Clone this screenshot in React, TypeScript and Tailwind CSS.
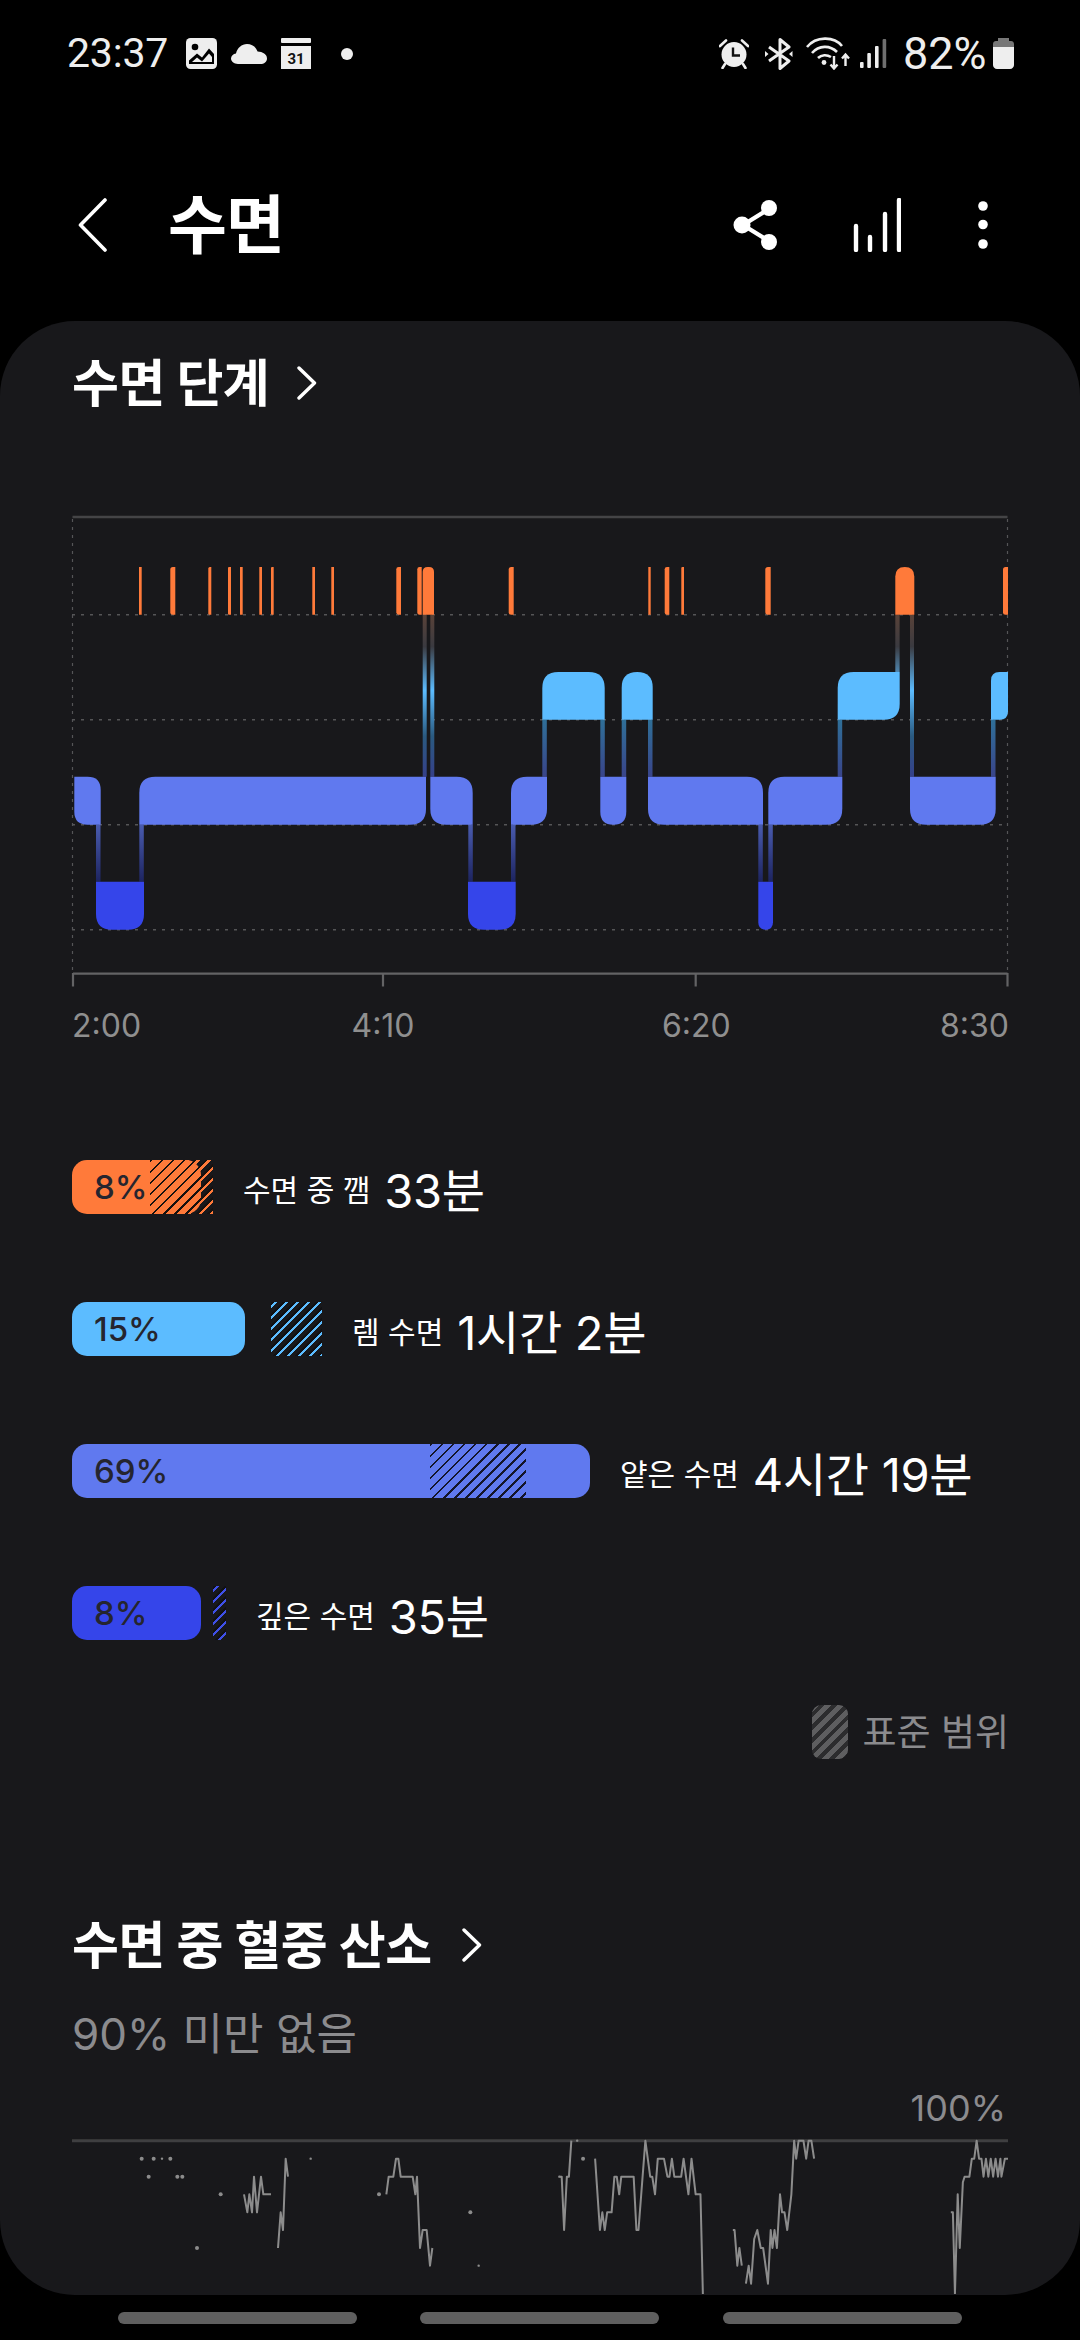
import React from "react";

const ORANGE = "#ff7a3a";
const REM = "#5cbcff";
const LIGHT = "#6079ef";
const DEEP = "#3545ea";

type Seg = [number, number, number, number, number, number];
function seg(x1: number, x2: number, y1: number, y2: number, tl: number, tr: number, br: number, bl: number) {
  const m = (x2 - x1) / 2;
  const a = Math.min(tl, m), b = Math.min(tr, m), c = Math.min(br, m), d = Math.min(bl, m);
  return `M${x1 + a} ${y1}H${x2 - b}Q${x2} ${y1} ${x2} ${y1 + b}V${y2 - c}Q${x2} ${y2} ${x2 - c} ${y2}H${x1 + d}Q${x1} ${y2} ${x1} ${y2 - d}V${y1 + a}Q${x1} ${y1} ${x1 + a} ${y1}Z`;
}

const W: [number, number] = [566, 613.7];
const R: [number, number] = [671, 718.7];
const L: [number, number] = [775.7, 823.7];
const D: [number, number] = [880.7, 928.7];
const r = 16;

const lightSegs: Seg[] = [
  [74.3, 100.7, 0, r, 0, r],
  [139.3, 426, r, 0, r, 0],
  [430.3, 472.7, 0, r, 0, r],
  [511, 547, r, 0, r, 0],
  [600.3, 626.3, 0, 0, r, r],
  [648, 763, 0, r, 0, r],
  [768.3, 842.3, r, 0, r, 0],
  [910, 995.7, 0, 0, r, r],
];
const deepSegs: Seg[] = [
  [96, 144, 0, 0, r, r],
  [468, 515.7, 0, 0, r, r],
  [758.3, 773, 0, 0, r, r],
];
const remSegs: Seg[] = [
  [542.3, 604.7, r, r, 0, 0],
  [621.7, 652.7, r, r, 0, 0],
  [837.7, 899.7, r, 0, r, 0],
  [991, 1008, r, 0, r, 0],
];
const wakeSegs: Seg[] = [
  [139, 141.7, 0, 0, 0, 0],
  [170.3, 175.3, 4, 0, 0, 4],
  [208.3, 211.3, 2, 0, 0, 2],
  [228, 231, 1, 0, 0, 1],
  [240, 242.7, 0, 0, 0, 0],
  [259.3, 262, 0, 0, 0, 0],
  [271, 273.7, 1, 0, 0, 1],
  [312.3, 315, 0, 0, 0, 0],
  [331.3, 334, 0, 0, 0, 0],
  [396.3, 401, 4, 0, 0, 4],
  [417.3, 421.7, 4, 0, 0, 4],
  [422.7, 434, 5, 5, 0, 0],
  [508.7, 513.7, 4, 0, 0, 4],
  [648.3, 650.7, 0, 0, 0, 0],
  [664.7, 669.3, 4, 0, 0, 4],
  [681.3, 684, 1, 0, 0, 0],
  [765.3, 770.7, 4, 0, 0, 4],
  [895.3, 914.3, 10, 10, 0, 0],
  [1003, 1008, 5, 0, 0, 5],
];

const connLD = [96, 139.3, 468.3, 511, 758.3, 768.3];
const connRL = [542.3, 600.3, 621.7, 648, 837.7, 991];
const connWL = [422.7, 430.3, 910];

const spo2 = (pts: number[][], base: number, sx: number) =>
  pts.map(([x, y]) => `${base + x / sx},${2080 + y / 3}`).join(" ");

const lines6 = [
  [[612, 346], [622, 400], [628, 346], [636, 400], [642, 293], [651, 400], [663, 293], [670, 346], [693, 346]],
  [[714, 507], [722, 400], [729, 453], [737, 239], [744, 293]],
  [[1039, 346], [1046, 293], [1060, 293], [1068, 239], [1075, 239], [1082, 293], [1118, 293], [1126, 346], [1131, 293], [1140, 507], [1148, 453], [1160, 453], [1170, 560], [1177, 507]],
];
const lines7 = [
  [[57, 293], [63, 293], [70, 453], [78, 293], [84, 293], [91, 185]],
  [[160, 239], [174, 453], [181, 400], [188, 453], [195, 400], [208, 400], [216, 293], [223, 293], [230, 346], [236, 293], [272, 293], [280, 453], [286, 453], [306, 185], [320, 293], [326, 293], [334, 346], [342, 239], [360, 239], [370, 293], [376, 293], [383, 239], [390, 293], [410, 293], [417, 239], [424, 293], [431, 346], [440, 239], [452, 346], [466, 346], [473, 645]],
  [[560, 453], [565, 453], [573, 560], [579, 507], [586, 560]],
  [[598, 614], [606, 560], [613, 614], [622, 480], [631, 453], [641, 507], [648, 507], [662, 614], [670, 453], [675, 507], [681, 453], [688, 507], [697, 346], [703, 400], [710, 400], [718, 453], [730, 346], [738, 185], [744, 239], [751, 185], [765, 185], [773, 239], [780, 185], [788, 185], [796, 239]],
  [[1193, 400], [1199, 400], [1205, 645], [1213, 346], [1219, 507], [1228, 310], [1233, 293], [1247, 293], [1254, 239], [1261, 239], [1268, 185], [1275, 239], [1282, 239], [1288, 293], [1295, 239], [1302, 293], [1309, 239], [1316, 293], [1323, 239], [1330, 293], [1337, 239], [1340, 293], [1350, 239], [1359, 239]],
];
const dots6 = [[305, 239, 2], [341, 239, 2], [366, 239, 1.2], [391, 239, 2], [326, 293, 2], [412, 293, 2], [427, 293, 2], [471, 507, 2], [542, 346, 2], [812, 239, 1.2], [1017, 346, 2], [1291, 400, 2], [1316, 560, 1.2], [1558, 293, 1.2]];
const dots7 = [[108, 185, 1.2], [125, 239, 2]];

function StageChart() {
  return (
    <svg className="block w-[1080px] h-[490px] mt-[87px]" viewBox="0 505 1080 490">
      <defs>
        <linearGradient id="ld" gradientUnits="userSpaceOnUse" x1="0" x2="0" y1="823" y2="881">
          <stop offset="0" stopColor="#4a5cb0" />
          <stop offset="1" stopColor="#1d2460" />
        </linearGradient>
        <linearGradient id="rl" gradientUnits="userSpaceOnUse" x1="0" x2="0" y1="718" y2="776">
          <stop offset="0" stopColor="#2f7098" />
          <stop offset="1" stopColor="#39448a" />
        </linearGradient>
        <linearGradient id="wl" gradientUnits="userSpaceOnUse" x1="0" x2="0" y1="613" y2="776">
          <stop offset="0" stopColor="#5a4238" />
          <stop offset="0.2" stopColor="#3a3a40" />
          <stop offset="0.47" stopColor="#5cbcff" />
          <stop offset="0.75" stopColor="#2a5a80" />
          <stop offset="1" stopColor="#35408a" />
        </linearGradient>
      </defs>
      <path d="M72.5 516H1007.5" stroke="#444446" strokeWidth="2.5" />
      <path d="M72.5 518V972M1007.5 518V972" stroke="#555557" strokeWidth="1.2" strokeDasharray="3 5" />
      {[613.7, 718.7, 823.7, 928.7].map((y) => (
        <path key={y} d={`M72 ${y}H1008`} stroke="#555557" strokeWidth="1.5" strokeDasharray="3 6" />
      ))}
      {connLD.map((x) => (
        <rect key={x} x={x} y="823.7" width="4.5" height="57" fill="url(#ld)" />
      ))}
      {connRL.map((x) => (
        <rect key={x} x={x} y="718.7" width="4.5" height="57" fill="url(#rl)" />
      ))}
      {connWL.map((x) => (
        <rect key={x} x={x} y="613.7" width="4" height="162" fill="url(#wl)" />
      ))}
      <rect x="895.3" y="613.7" width="4.3" height="57.3" fill="url(#wl)" />
      {lightSegs.map((s, i) => (
        <path key={i} d={seg(s[0], s[1], L[0], L[1], s[2], s[3], s[4], s[5])} fill={LIGHT} />
      ))}
      {deepSegs.map((s, i) => (
        <path key={i} d={seg(s[0], s[1], D[0], D[1], s[2], s[3], s[4], s[5])} fill={DEEP} />
      ))}
      {remSegs.map((s, i) => (
        <path key={i} d={seg(s[0], s[1], R[0], R[1], s[2], s[3], s[4], s[5])} fill={REM} />
      ))}
      {wakeSegs.map((s, i) => (
        <path key={i} d={seg(s[0], s[1], W[0], W[1], s[2], s[3], s[4], s[5])} fill={ORANGE} />
      ))}
      <path d="M73 972.7H1007.5M73 972V985.5M383 972V985.5M695.7 972V985.5M1007.5 972V985.5" stroke="#636365" strokeWidth="2.2" fill="none" />
    </svg>
  );
}

function SpoChart() {
  return (
    <svg className="block w-[1080px] h-[155px]" viewBox="0 2140 1080 155">
      <path d="M72 2141.7H1008" stroke="#3f3f41" strokeWidth="3" />
      {lines6.map((p, i) => (
        <polyline key={i} points={spo2(p, 40, 3)} fill="none" stroke="#8c8c8c" strokeWidth="2" strokeLinejoin="round" />
      ))}
      {lines7.map((p, i) => (
        <polyline key={i} points={spo2(p, 540, 2.904)} fill="none" stroke="#8c8c8c" strokeWidth="2" strokeLinejoin="round" />
      ))}
      {dots6.map(([x, y, d], i) => (
        <circle key={i} cx={40 + x / 3} cy={2080 + y / 3} r={d} fill="#8c8c8c" />
      ))}
      {dots7.map(([x, y, d], i) => (
        <circle key={i} cx={540 + x / 2.904} cy={2080 + y / 3} r={d} fill="#8c8c8c" />
      ))}
    </svg>
  );
}

function Chevron({ className }: { className: string }) {
  return (
    <svg className={className} viewBox="0 0 20 34" fill="none">
      <path d="M2 2L17.5 17L2 32" stroke="#fff" strokeWidth="3.4" strokeLinecap="round" strokeLinejoin="round" />
    </svg>
  );
}

function StatusBar() {
  return (
    <div className="h-[105px] flex items-center justify-between pl-[67px] pr-[66px] text-[#eeeeee] pt-[2px] font-['Roboto',sans-serif]">
      <div className="flex items-center">
        <span className="text-[41px] leading-none w-[119px] tracking-[-0.2px]">23:37</span>
        <svg className="w-[31px] h-[31px]" viewBox="0 0 31 31">
          <rect width="31" height="31" rx="4.5" fill="#eeeeee" />
          <circle cx="9" cy="9" r="3.3" fill="#000" />
          <path d="M3 26V22.5L11 15.5L16 19.5L23 10.5L28 16V26Z" fill="#000" />
          <path d="M6 24L11 19.5L16 23.5L23 15.5L26 19V24Z" fill="#eeeeee" />
        </svg>
        <svg className="w-[36px] h-[20px] ml-[14px]" viewBox="0 0 36 20">
          <path d="M7 20C3 20 0 17.6 0 14.6C0 11.8 2.2 9.8 5 9.4C6.2 4 10.8 0 16 0C21 0 25 3 26.6 7.6C31.6 7.8 36 10.4 36 14.4C36 17.8 33 20 29.5 20Z" fill="#eeeeee" />
        </svg>
        <svg className="w-[30px] h-[31px] ml-[14px]" viewBox="0 0 30 31">
          <rect width="30" height="5" rx="1" fill="#eeeeee" />
          <rect y="8" width="30" height="23" fill="#eeeeee" />
          <text x="15" y="26" textAnchor="middle" fontSize="15" fontWeight="700" fontFamily="Roboto, sans-serif" fill="#111">31</text>
        </svg>
        <div className="w-[12px] h-[12px] rounded-full bg-[#eeeeee] ml-[30px]" />
      </div>
      <div className="flex items-center">
        <svg className="w-[30px] h-[31px]" viewBox="0 0 30 31">
          <circle cx="15" cy="16.5" r="12.5" fill="#eeeeee" />
          <path d="M1 8L7 2.5M29 8L23 2.5" stroke="#eeeeee" strokeWidth="2.6" strokeLinecap="round" />
          <path d="M6 26L3.5 30M24 26L26.5 30" stroke="#eeeeee" strokeWidth="2.6" strokeLinecap="round" />
          <path d="M14 9.5V17.5H21" stroke="#111" strokeWidth="2.4" fill="none" />
        </svg>
        <svg className="w-[28px] h-[32px] ml-[16px]" viewBox="0 0 28 32">
          <path d="M4 9L24 23L15 30.5V1.5L24 9L4 23" stroke="#eeeeee" strokeWidth="3" fill="none" strokeLinejoin="round" />
          <path d="M0 13L3.5 16L0 19ZM27.5 13L24 16L27.5 19Z" fill="#eeeeee" />
        </svg>
        <svg className="w-[44px] h-[33px] ml-[13px]" viewBox="0 0 44 33">
          <path d="M1 10C10 -1 28 -1 36 9" stroke="#eeeeee" strokeWidth="2.6" fill="none" />
          <path d="M6 16C13 8 24 8 31 15" stroke="#eeeeee" strokeWidth="2.6" fill="none" />
          <path d="M12 21C15.5 17.5 21 17.5 25 20" stroke="#eeeeee" strokeWidth="2.6" fill="none" />
          <circle cx="18" cy="25.5" r="2.4" fill="#eeeeee" />
          <path d="M28 19V31M24.5 27.5L28 31.5L31.5 27.5" stroke="#eeeeee" strokeWidth="2.4" fill="none" />
          <path d="M39.5 29V18M36 21.5L39.5 17.5L43 21.5" stroke="#eeeeee" strokeWidth="2.4" fill="none" />
        </svg>
        <svg className="w-[27px] h-[30px] ml-[10px]" viewBox="0 0 27 30">
          <rect x="0" y="23" width="3.6" height="6" rx="1" fill="#eeeeee" />
          <rect x="7.3" y="14" width="3.6" height="15" rx="1" fill="#eeeeee" />
          <rect x="15" y="7" width="3.6" height="22" rx="1" fill="#eeeeee" />
          <rect x="22.6" y="0" width="3.6" height="29" rx="1" fill="#6f6f6f" />
        </svg>
        <span className="text-[45px] leading-none ml-[16px] w-[90px]">82%</span>
        <svg className="w-[21px] h-[31px]" viewBox="0 0 21 31">
          <path d="M5 0H16V3H18C19.7 3 21 4.3 21 6V9H0V6C0 4.3 1.3 3 3 3H5Z" fill="#777777" />
          <path d="M0 9H21V27C21 29.2 19.2 31 17 31H4C1.8 31 0 29.2 0 27Z" fill="#eeeeee" />
        </svg>
      </div>
    </div>
  );
}

function Header() {
  return (
    <div className="h-[216px] flex items-center pl-[78px] pr-[92px] pt-[24px]">
      <svg className="w-[29px] h-[54px]" viewBox="0 0 29 54" fill="none">
        <path d="M27 2L2.5 27L27 52" stroke="#fff" strokeWidth="3.6" strokeLinecap="round" strokeLinejoin="round" />
      </svg>
      <h1 className="ml-[61px] text-[64px] leading-none font-bold text-white tracking-[-1px]">수면</h1>
      <div className="ml-auto flex items-center">
        <svg className="w-[46px] h-[52px]" viewBox="0 0 46 52">
          <path d="M36 10L10 26L36 42" stroke="#fff" strokeWidth="4.2" fill="none" />
          <circle cx="36" cy="9" r="8" fill="#fff" />
          <circle cx="9" cy="26" r="8.5" fill="#fff" />
          <circle cx="36" cy="43" r="8" fill="#fff" />
        </svg>
        <svg className="w-[48px] h-[54px] ml-[74px]" viewBox="0 0 48 54">
          <g stroke="#fff" strokeWidth="4.4" strokeLinecap="round">
            <path d="M3 28V52M17 39V52M32 16V52M46 2V52" />
          </g>
        </svg>
        <svg className="w-[10px] h-[48px] ml-[77px]" viewBox="0 0 10 48">
          <circle cx="5" cy="5" r="4.8" fill="#fff" />
          <circle cx="5" cy="23.5" r="4.8" fill="#fff" />
          <circle cx="5" cy="43" r="4.8" fill="#fff" />
        </svg>
      </div>
    </div>
  );
}

function Row({ pct, boxW, barW, hatchLeft, hatchW, hatch, bar, label, value, mt }: {
  pct: string; boxW: string; barW: string; hatchLeft: string; hatchW: string; hatch: string; bar: string; label: string; value: string; mt: string;
}) {
  return (
    <div className={`flex items-center h-[54px] ${mt}`}>
      <div className={`relative h-[54px] shrink-0 ${boxW}`}>
        <div className={`h-[54px] rounded-[15px] flex items-center pl-[22px] ${barW} ${bar}`}>
          <span className="text-[33px] leading-none font-medium text-[#25252f]">{pct}</span>
        </div>
        <div className={`absolute top-0 h-[54px] ${hatchLeft} ${hatchW} ${hatch}`} />
      </div>
      <span className="ml-[30px] text-[30px] leading-none text-white mt-[6px]">{label}</span>
      <span className="ml-[14px] text-[47px] leading-none text-white mt-[6px] font-normal tracking-[-0.3px]">{value}</span>
    </div>
  );
}

export default function App() {
  return (
    <div className="w-[1080px] h-[2340px] bg-black flex flex-col overflow-hidden font-['Inter','Noto_Sans_CJK_KR',sans-serif]">
      <StatusBar />
      <Header />
      <main className="h-[1974px] shrink-0 bg-[#18181b] rounded-[75px] overflow-hidden">
        <div className="flex items-center pl-[72px] h-[72px] mt-[26px]">
          <h2 className="text-[51px] leading-none font-bold text-white tracking-[-0.5px]">수면 단계</h2>
          <Chevron className="w-[20px] h-[34px] ml-[28px]" />
        </div>
        <StageChart />
        <div className="flex pl-[72px] h-[40px] mt-[10px] text-[32px] leading-[40px] text-[#8f8f8f]">
          <span className="w-[68px]">2:00</span>
          <span className="w-[68px] ml-[209px] text-center">4:10</span>
          <span className="w-[68px] ml-[245px] text-center">6:20</span>
          <span className="w-[68px] ml-[210px] text-right">8:30</span>
        </div>
        <div className="pl-[72px] mt-[114px]">
          <Row mt="mt-0" pct="8%" boxW="w-[141px]" barW="w-[129px]" hatchLeft="left-[78px]" hatchW="w-[63px]" bar="bg-[#ff7a3a]"
            hatch="bg-[repeating-linear-gradient(135deg,#17110f_0,#17110f_2px,#ff7a3a_2px,#ff7a3a_4.6px,transparent_4.6px,transparent_7.8px)]"
            label="수면 중 깸" value="33분" />
          <Row mt="mt-[88px]" pct="15%" boxW="w-[250px]" barW="w-[173px]" hatchLeft="left-[199px]" hatchW="w-[51px]" bar="bg-[#5cbcff]"
            hatch="bg-[repeating-linear-gradient(135deg,#111114_0,#111114_2.4px,#5cbcff_2.4px,#5cbcff_4.6px,transparent_4.6px,transparent_7.8px)]"
            label="렘 수면" value="1시간 2분" />
          <Row mt="mt-[88px]" pct="69%" boxW="w-[518px]" barW="w-[518px]" hatchLeft="left-[358px]" hatchW="w-[96px]" bar="bg-[#6079ef]"
            hatch="bg-[repeating-linear-gradient(135deg,#14152a_0,#14152a_2px,#6079ef_2px,#6079ef_4.6px,transparent_4.6px,transparent_7.8px)]"
            label="얕은 수면" value="4시간 19분" />
          <Row mt="mt-[88px]" pct="8%" boxW="w-[154px]" barW="w-[129px]" hatchLeft="left-[141px]" hatchW="w-[13px]" bar="bg-[#3545ea]"
            hatch="bg-[repeating-linear-gradient(135deg,#111114_0,#111114_2.4px,#3f50e8_2.4px,#3f50e8_4.6px,transparent_4.6px,transparent_7.8px)]"
            label="깊은 수면" value="35분" />
        </div>
        <div className="flex items-center justify-end pr-[71px] mt-[65px] h-[54px]">
          <div className="w-[36px] h-[54px] rounded-[9px] bg-[repeating-linear-gradient(135deg,#5e5e60_0,#5e5e60_5px,#2c2c2e_5px,#2c2c2e_9px)]" />
          <span className="ml-[14px] text-[37px] leading-none text-[#8b8b8e]">표준 범위</span>
        </div>
        <div className="flex items-center pl-[72px] h-[60px] mt-[156px]">
          <h2 className="text-[51px] leading-none font-bold text-white tracking-[-0.5px]">수면 중 혈중 산소</h2>
          <Chevron className="w-[20px] h-[34px] ml-[30px]" />
        </div>
        <div className="pl-[72px] mt-[34px] text-[44px] leading-[50px] text-[#8b8b8e]">90% 미만 없음</div>
        <div className="pr-[74px] mt-[26px] text-right text-[36px] leading-[46px] text-[#8b8b8e]">100%</div>
        <div className="mt-[8px]">
          <SpoChart />
        </div>
      </main>
      <div className="flex-1 flex items-start pt-[17px] pl-[118px]">
        <div className="w-[239px] h-[12px] rounded-full bg-[#5f5f5f]" />
        <div className="w-[239px] h-[12px] rounded-full bg-[#5f5f5f] ml-[63px]" />
        <div className="w-[239px] h-[12px] rounded-full bg-[#5f5f5f] ml-[64px]" />
      </div>
    </div>
  );
}
